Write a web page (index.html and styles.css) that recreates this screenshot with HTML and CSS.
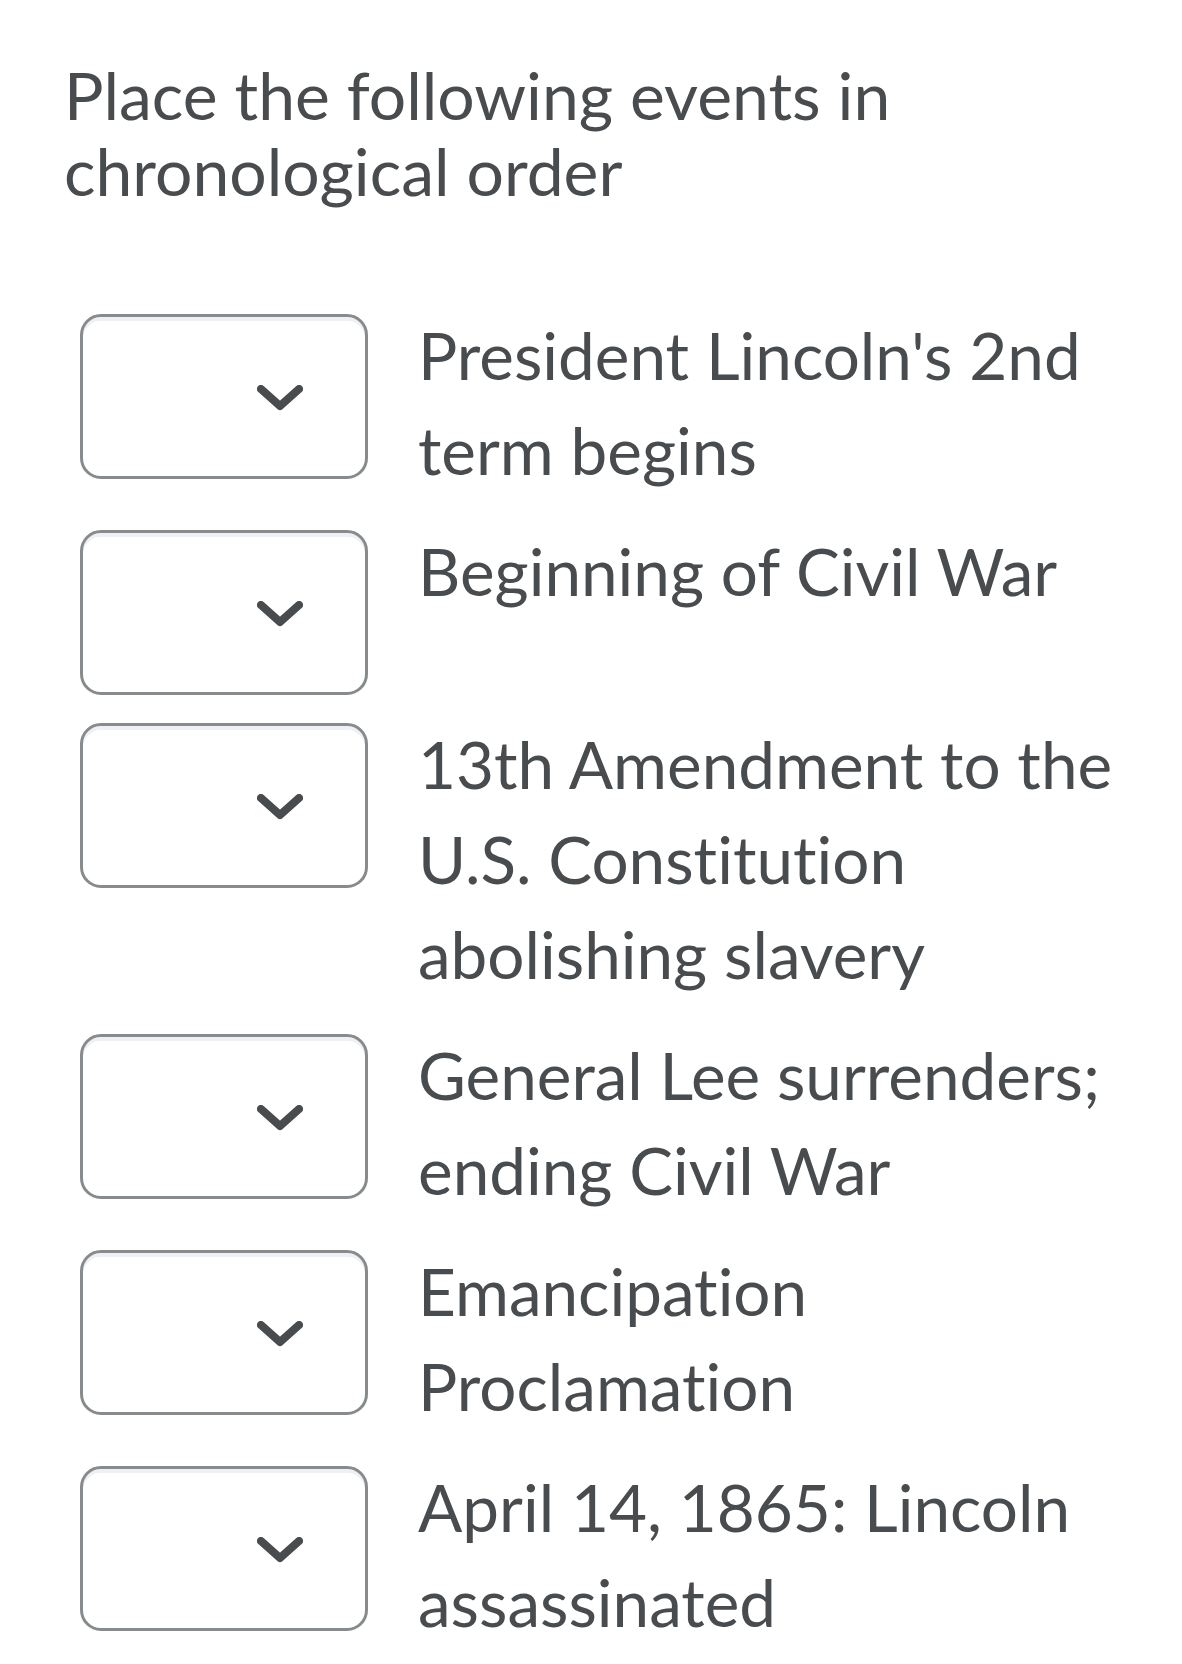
FILE: index.html
```html
<!DOCTYPE html>
<html lang="en">
<head>
<meta charset="utf-8">
<title>Ordering question</title>
<link rel="stylesheet" href="styles.css">
</head>
<body>
<main class="question">
  <h1 class="prompt">Place the following events in chronological order</h1>
  <ul class="items">
    <li class="item">
      <div class="select"><svg class="chev" viewBox="0 0 46 26" width="46" height="26"><polyline points="4,4 23,21 42,4"/></svg></div>
      <p class="label">President Lincoln's 2nd term begins</p>
    </li>
    <li class="item">
      <div class="select"><svg class="chev" viewBox="0 0 46 26" width="46" height="26"><polyline points="4,4 23,21 42,4"/></svg></div>
      <p class="label">Beginning of Civil War</p>
    </li>
    <li class="item">
      <div class="select"><svg class="chev" viewBox="0 0 46 26" width="46" height="26"><polyline points="4,4 23,21 42,4"/></svg></div>
      <p class="label">13th Amendment to the U.S. Constitution abolishing slavery</p>
    </li>
    <li class="item">
      <div class="select"><svg class="chev" viewBox="0 0 46 26" width="46" height="26"><polyline points="4,4 23,21 42,4"/></svg></div>
      <p class="label">General Lee surrenders; ending Civil War</p>
    </li>
    <li class="item">
      <div class="select"><svg class="chev" viewBox="0 0 46 26" width="46" height="26"><polyline points="4,4 23,21 42,4"/></svg></div>
      <p class="label">Emancipation Proclamation</p>
    </li>
    <li class="item">
      <div class="select"><svg class="chev" viewBox="0 0 46 26" width="46" height="26"><polyline points="4,4 23,21 42,4"/></svg></div>
      <p class="label">April 14, 1865: Lincoln assassinated</p>
    </li>
  </ul>
</main>
</body>
</html>
```

FILE: styles.css
```css
html, body {
  margin: 0;
  padding: 0;
  background: #ffffff;
}

body {
  font-family: Lato, "Open Sans", sans-serif;
  color: #494c4e;
  font-variant-ligatures: no-common-ligatures;
}

.question {
  padding: 57px 0 0 64px;
}

.prompt {
  margin: 0;
  width: 900px;
  font-size: 66px;
  font-weight: 400;
  line-height: 76px;
}

.items {
  list-style: none;
  margin: 98px 0 0 0;
  padding: 0 0 0 16px;
  display: flex;
  flex-direction: column;
  gap: 21px;
}

.item {
  display: flex;
  align-items: flex-start;
  gap: 50px;
}

.select {
  flex: 0 0 auto;
  box-sizing: border-box;
  width: 288px;
  height: 165px;
  margin-top: 7px;
  border: 3px solid #888b8d;
  border-radius: 21px;
  background: #ffffff;
  box-shadow: inset 0 4px 0 0 #eef0f3;
  display: flex;
  align-items: center;
  justify-content: flex-end;
  padding: 3px 62px 0 0;
}

.chev {
  display: block;
}

.chev polyline {
  fill: none;
  stroke: #494c4e;
  stroke-width: 8;
  stroke-linecap: round;
  stroke-linejoin: round;
}

.label {
  margin: 0;
  padding-bottom: 5px;
  width: 730px;
  font-size: 65.6px;
  line-height: 95px;
}
```
